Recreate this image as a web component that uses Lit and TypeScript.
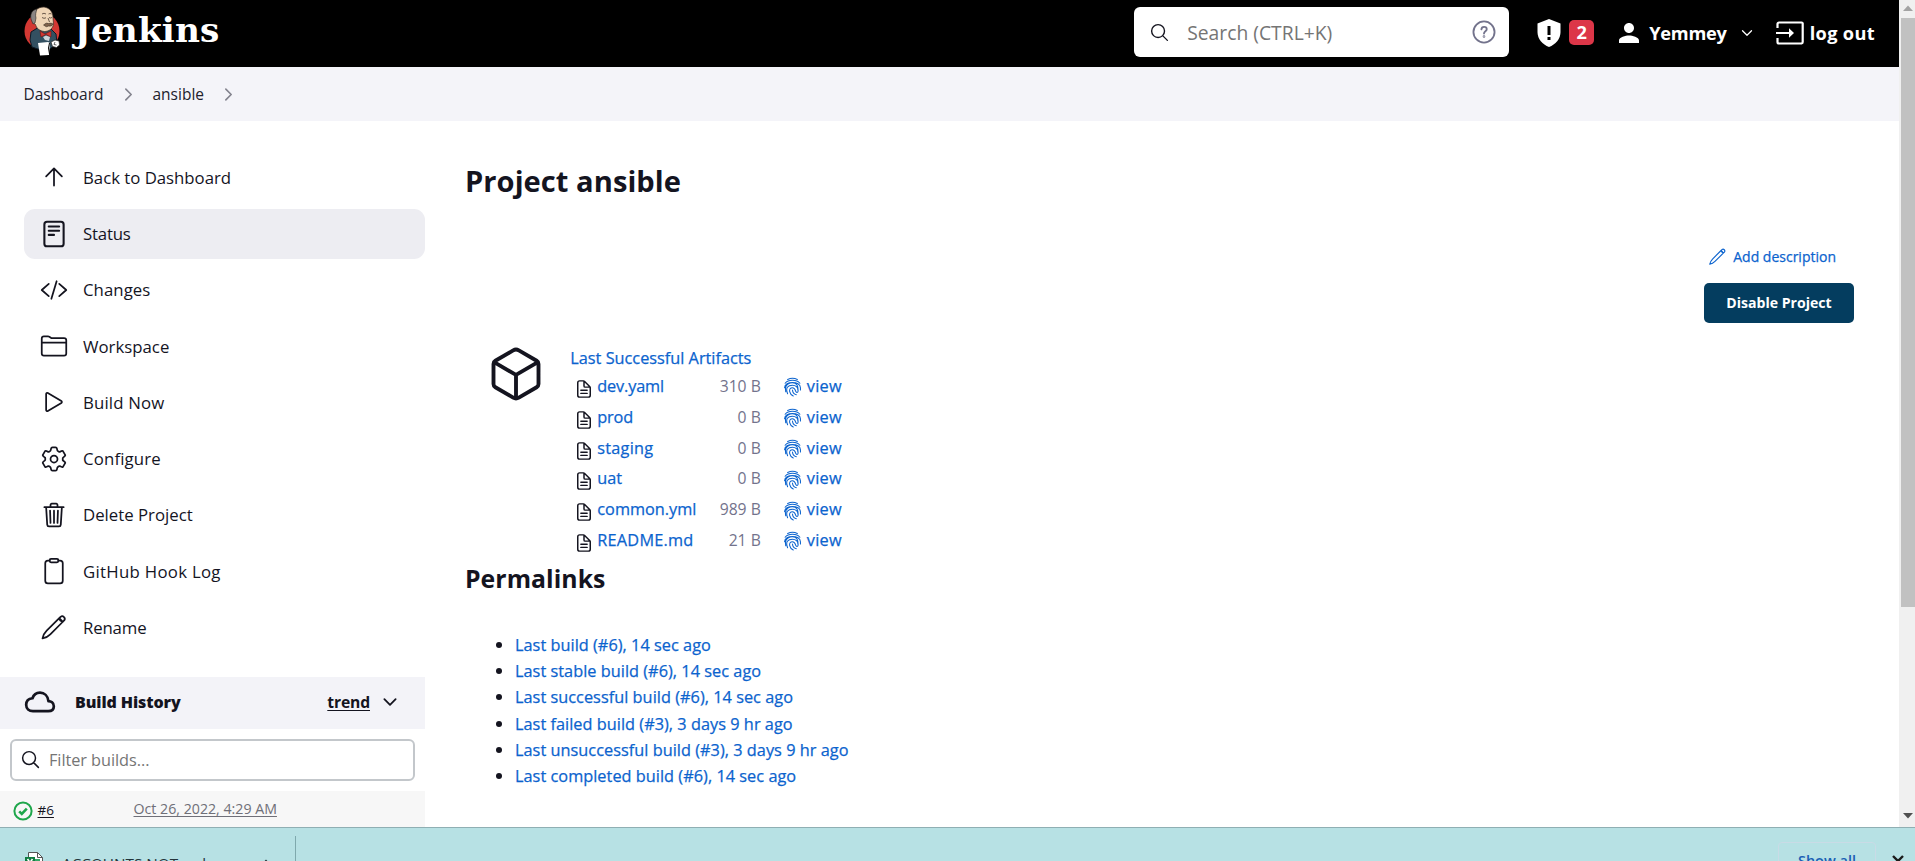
import { LitElement, html, svg, css, nothing, type TemplateResult } from "lit";
import { customElement, property } from "lit/decorators.js";
import { styleMap } from "lit/directives/style-map.js";

const ICONS: Record<string, TemplateResult> = {
  search: svg`<path d="M221.09 64a157.09 157.09 0 10157.09 157.09A157.1 157.1 0 00221.09 64zM338.29 338.29L448 448"/>`,
  up: svg`<path d="M112 244l144-144 144 144M256 120v292"/>`,
  status: svg`<rect x="80" y="32" width="352" height="448" rx="48"/><path d="M160 120h190M160 196h190M160 272h96"/>`,
  code: svg`<path d="M160 368L32 256l128-112M352 368l128-112-128-112M304 96l-96 320"/>`,
  folder: svg`<path d="M440 432H72a40 40 0 01-40-40V120a40 40 0 0140-40h75.89a40 40 0 0122.19 6.72l27.84 18.56a40 40 0 0022.19 6.72H440a40 40 0 0140 40v240a40 40 0 01-40 40zM32 192h448"/>`,
  play: svg`<path d="M112 111v290c0 17.44 17 28.52 31 20.16l247.9-148.37c12.12-7.25 12.12-26.33 0-33.58L143 90.84c-14-8.36-31 2.72-31 20.16z"/>`,
  gear: svg`<circle cx="256" cy="256" r="64"/><path d="M416.4 256a154 154 0 01-1.5 20.8c12 14 45.200 26 47.600 49.200l-42.800 74c-22 10-44 -6-58 -13.500a16 16 0 00-15.200 1.800A164 164 0 01325 400.800c-9 5-10 20-15.500 46 -2 14-12 23.200-26 23.200h-55c-14 0-24-9-26-23.200-5-26-6-41-15.500-46a155 155 0 01-21.500-12.600 16 16 0 00-15.100-1.700c-14 7.500-36 23.500-58 13.500l-42.800-74c2-22 26-32 40.700-43.700a16 16 0 006-14.100 145 145 0 010-24.900 16 16 0 00-6-13.900C75.500 217.700 51.500 208 49.500 186l42.800-74c22-10 44 6 58 13.500a16 16 0 0015.200-1.800A164 164 0 01187 111.200c9-5 10-20 15.500-46C204.500 51 214.500 42 228.500 42h55c14 0 24 9 26 23.200 5 26 6 41 15.500 46a155 155 0 0121.500 12.600 16 16 0 0015.100 1.700c14-7.500 36-23.500 58-13.500l42.800 74c-2 22-26 32-40.700 43.700a16 16 0 00-6 14.100z"/>`,
  trash: svg`<path d="M112 112l20 320c.95 18.49 14.4 32 32 32h184c17.67 0 30.87-13.51 32-32l20-320M80 112h352M192 112V72a23.93 23.93 0 0124-24h80a23.93 23.93 0 0124 24v40M256 176v224M184 176l8 224M328 176l-8 224"/>`,
  clipboard: svg`<path d="M336 64h32a48 48 0 0148 48v320a48 48 0 01-48 48H144a48 48 0 01-48-48V112a48 48 0 0148-48h32"/><rect x="176" y="32" width="160" height="64" rx="26"/>`,
  pencil: svg`<path d="M352 94L122 324C80 366 54 420 46 466c46-8 100-34 142-76l230-230M352 94l24-24a47 47 0 0166 66l-24 24zM352 94q10 56 66 66"/>`,
  cloud: svg`<path d="M400 240c-8.89-89.54-71-144-144-144-69 0-113.44 48.2-128 96-60 6-108 43.59-108 112 0 66 50 108 116 108h260c55 0 96-27.44 96-84 0-59.820-49-85.760-92-88z"/>`,
  cube: svg`<path d="M448 341.37V170.61A32 32 0 00432.11 143l-152-88.46a47.94 47.94 0 00-48.24 0L79.89 143A32 32 0 0064 170.61v170.76A32 32 0 0079.89 369l152 88.46a48 48 0 0048.24 0l152-88.46A32 32 0 00448 341.37zM69 154l187 110 187-110M256 464V264"/>`,
  file: svg`<path d="M416 221.25V416a48 48 0 01-48 48H144a48 48 0 01-48-48V96a48 48 0 0148-48h98.75a32 32 0 0122.62 9.37l141.26 141.26a32 32 0 019.37 22.62zM256 56v120a32 32 0 0032 32h120M176 288h160M176 368h160"/>`,
  finger: svg`<path d="M125 42C205 2 307 2 387 42M58 142C140 36 372 36 454 142M42 262C42 74 470 74 470 262v60M74 372C20 120 256 130 256 130c120 0 156 84 152 220-2 50-52 44-62 16-20-60-26-106-90-106-56 0-90 40-76 106 14 60 44 96 96 120M124 424C60 268 130 196 256 196c90 0 150 60 144 130M256 322c4 80 46 116 104 128"/>`,
  chevR: svg`<path d="M184 112l144 144-144 144"/>`,
  chevD: svg`<path d="M112 184l144 144 144-144"/>`,
  help: svg`<circle cx="256" cy="256" r="208"/><path d="M205 205c2-34 24-50 53-50 32 0 52 20 52 46 0 40-54 42-54 86"/><circle cx="256" cy="345" r="8"/>`,
};

interface Entry { label: string; spacing?: number }
interface Task extends Entry { icon: string; active?: boolean }
interface Artifact extends Entry { size: string }

const TASKS: Task[] = [
  { icon: "up", label: "Back to Dashboard", spacing: -0.02 },
  { icon: "status", label: "Status", spacing: -0.2, active: true },
  { icon: "code", label: "Changes", spacing: 0.05 },
  { icon: "folder", label: "Workspace" },
  { icon: "play", label: "Build Now", spacing: 0.16 },
  { icon: "gear", label: "Configure", spacing: 0.15 },
  { icon: "trash", label: "Delete Project" },
  { icon: "clipboard", label: "GitHub Hook Log", spacing: 0.29 },
  { icon: "pencil", label: "Rename", spacing: -0.15 },
];

const ARTIFACTS: Artifact[] = [
  { label: "dev.yaml", size: "310 B", spacing: -0.15 },
  { label: "prod", size: "0 B", spacing: -0.15 },
  { label: "staging", size: "0 B", spacing: 0.22 },
  { label: "uat", size: "0 B" },
  { label: "common.yml", size: "989 B" },
  { label: "README.md", size: "21 B", spacing: 0.22 },
];

const PERMALINKS = [
  "Last build (#6), 14 sec ago",
  "Last stable build (#6), 14 sec ago",
  "Last successful build (#6), 14 sec ago",
  "Last failed build (#3), 3 days 9 hr ago",
  "Last unsuccessful build (#3), 3 days 9 hr ago",
  "Last completed build (#6), 14 sec ago",
];

const tracking = (e: Entry) => styleMap({ letterSpacing: `${e.spacing ?? 0}px` });

@customElement("line-icon")
class LineIcon extends LitElement {
  @property() name = "";
  @property({ type: Number }) size = 28;
  @property({ type: Number }) weight = 32;
  static styles = css`
    :host { display: block; flex: none; }
    svg { display: block; overflow: visible; fill: none; stroke: currentColor; stroke-linecap: round; stroke-linejoin: round; }
  `;
  render() {
    return html`<svg width=${this.size} height=${this.size} viewBox="0 0 512 512" stroke-width=${this.weight}>${ICONS[this.name] ?? nothing}</svg>`;
  }
}

@customElement("page-header")
class PageHeader extends LitElement {
  static styles = css`
    :host { display: flex; height: 67px; background: #000; color: #fff; font-weight: 700; font-size: 18.2px; }
    .brand { display: flex; align-items: flex-start; padding: 6px 0 0 24px; gap: 14.500px; }
    .word { font: 700 34.3px/48px "DejaVu Serif", serif; letter-spacing: .15px; }
    .tools { display: flex; margin-left: auto; padding-right: 24px; }
    .search { display: flex; align-items: center; box-sizing: border-box; width: 375px; height: 50px; margin-top: 7px; padding: 0 12px 0 15px; border-radius: 6px; background: #fff; color: #14141f; }
    .search .hint { flex: 1; margin-left: 17px; font-weight: 400; font-size: 19.3px; color: #757575; }
    .search .help { color: #73738c; }
    .group { display: flex; align-items: center; height: 65px; }
    .shield { margin-left: 28px; }
    .badge { box-sizing: border-box; width: 25px; height: 25px; margin-left: 8px; border-radius: 5px; background: #dc3648; line-height: 25px; text-align: center; }
    .user { margin-left: 25px; }
    .user .name { margin-left: 10px; letter-spacing: -0.25px; }
    .user .arrow { margin-left: 12px; }
    .out { margin-left: 21px; }
    .out span { margin-left: 6px; letter-spacing: 0.35px; }
    svg { display: block; flex: none; }
  `;
  render() {
    return html`
      <div class="brand">
        <svg width="36" height="50" viewBox="0 0 36 50">
          <ellipse cx="18" cy="25" rx="17.500" ry="18" fill="#d33833"/>
          <path d="M7 26l8-5 11 1 6 6 1 9-7 6-9 1-9-3-2-7z" fill="#335061" stroke="#0d1a26" stroke-width="1"/>
          <path d="M8 12c0-7 6-11 12-11 6 1 9 5 9 11l.5 6c-.5 5-5 7.500-9 7.500-5-.5-8-3-9-7l-3-2z" fill="#f0d6b7" stroke="#3a2c24" stroke-width=".7"/>
          <path d="M13 3C8 4 6 8 7 13l2 5 2-1 1-5c-1-3 0-6 1-9z" fill="#8a8583" stroke="#2b2624" stroke-width=".6"/>
          <path d="M18 8q2-1.500 4 0M24.500 8q1.500-1 3 0M18 11.500q2 1.500 4 .3M25 11.500q1.500 1 3 0M24 12l1.500 4" fill="none" stroke="#4a3a30" stroke-width=".8"/>
          <path d="M19.500 19q3-3 5-1.500 3-1 4.500.5-1 3-4.500 2-2 2-5-1z" fill="#81634c" stroke="#2f261f" stroke-width=".5"/>
          <path d="M16 25l5 3 6-3v6l-5-2.500-5 2.500z" fill="#d33833" stroke="#6d1413" stroke-width=".6"/>
          <path d="M19 31l3-1.500 4 1.500-1 4-4-1z" fill="#cdd3d8"/>
          <path d="M27 36l4-2 4 1 .5 4-3 2.500-4-1z" fill="#fff" stroke="#222" stroke-width=".7"/>
          <path d="M31 36l-1 2.500 2.500.5" fill="none" stroke="#222" stroke-width=".7"/>
          <path d="M14 37l10-1 2 1-1 12-9 .5z" fill="#fff"/>
          <path d="M25.500 37l-1 5 1 6" fill="none" stroke="#000" stroke-width="1"/>
        </svg>
        <span class="word">Jenkins</span>
      </div>
      <div class="tools">
        <div class="search">
          <line-icon name="search" size="21" weight="34"></line-icon>
          <span class="hint">Search (CTRL+K)</span>
          <line-icon class="help" name="help" size="26" weight="36"></line-icon>
        </div>
        <div class="group shield">
          <svg width="24" height="28" viewBox="0 0 24 28"><path fill="#fff" d="M12 0l11.500 4.500v8.500c0 7-5 12.500-11.500 15C5.500 25.500.5 20 .5 13V4.500z"/><path fill="#000" d="M10.500 7h3v9h-3zM10.500 18h3v3h-3z"/></svg>
          <span class="badge">2</span>
        </div>
        <div class="group user">
          <svg width="20" height="20" viewBox="4 4 16 16" fill="#fff"><path d="M12 12c2.210 0 4-1.790 4-4s-1.790-4-4-4-4 1.790-4 4 1.790 4 4 4zm0 2c-2.670 0-8 1.340-8 4v2h16v-2c0-2.660-5.330-4-8-4z"/></svg>
          <span class="name">Yemmey</span>
          <line-icon class="arrow" name="chevD" size="16" weight="40"></line-icon>
        </div>
        <div class="group out">
          <svg width="28" height="24" viewBox="0 0 28 24" fill="none" stroke="#fff" stroke-width="2.200"><path d="M1.500 7V3a1.500 1.500 0 011.500-1.500h22.500A1.200 1.200 0 0126.700 3v18a1.500 1.500 0 01-1.200 1.500H3A1.500 1.500 0 011.500 21v-4M0 12h15"/><path d="M13 7.200l5 4.800-5 4.800z" fill="#fff" stroke="none"/></svg>
          <span>log out</span>
        </div>
      </div>`;
  }
}

@customElement("side-panel")
class SidePanel extends LitElement {
  static styles = css`
    :host { display: flex; flex-direction: column; width: 425px; flex: none; color: #14141f; }
    nav { display: flex; flex-direction: column; gap: 6.250px; padding: 31.400px 0 0 24px; }
    .task { display: flex; align-items: center; box-sizing: border-box; height: 50px; padding-left: 16px; gap: 15px; border-radius: 11px; font-size: 16.800px; }
    .active { background: #ededf2; }
    .history { display: flex; align-items: center; box-sizing: border-box; height: 52px; margin-top: 24.500px; padding: 0 25px 1px 25px; background: #f3f3f8; font-weight: 700; font-size: 16px; }
    .history b { margin-left: 20px; letter-spacing: -.1px; }
    .history u { margin-left: auto; margin-right: 10px; font-size: 15.700px; letter-spacing: -.15px; text-underline-offset: 2px; }
    .filter { display: flex; align-items: center; box-sizing: border-box; height: 43px; margin: 10px; padding: 0 9px; border: 2px solid #c3c7cb; border-radius: 6px; color: #14141f; }
    .filter line-icon { margin-left: -1px; }
    .filter span { margin-left: 8px; margin-top: 1px; font-size: 16.300px; color: #757575; letter-spacing: -.05px; }
    .build { display: flex; align-items: center; height: 36px; padding-left: 13px; background: #f7f7f7; font-size: 14.200px; text-underline-offset: 2px; }
    .build svg { margin-top: 3px; }
    .build u { margin-top: -1px; }
    .build .num { width: 96px; margin-left: 4.500px; }
    .build .num u { font-size: 13.500px; }
    .build .date { color: #6f6f78; }
  `;
  render() {
    return html`
      <nav>
        ${TASKS.map((t) => html`<div class="task ${t.active ? "active" : ""}">
          <line-icon name=${t.icon} size="28" weight=${t.icon === "status" ? 38 : 32}></line-icon>
          <span style=${tracking(t)}>${t.label}</span>
        </div>`)}
      </nav>
      <div class="history">
        <line-icon name="cloud" size="30" weight="46"></line-icon>
        <b>Build History</b><u>trend</u>
        <line-icon name="chevD" size="20" weight="46"></line-icon>
      </div>
      <div class="filter"><line-icon name="search" size="21" weight="36"></line-icon><span>Filter builds...</span></div>
      <div class="build">
        <svg width="20" height="20" viewBox="0 0 20 20" fill="none" stroke="#1ea64b"><circle cx="10" cy="10" r="8.600" stroke-width="2"/><path d="M6.200 10.300l2.600 2.600 5-5.200" stroke-width="2.600"/></svg>
        <span class="num"><u>#6</u></span><u class="date">Oct 26, 2022, 4:29 AM</u>
      </div>`;
  }
}

@customElement("project-view")
class ProjectView extends LitElement {
  static styles = css`
    :host { display: flex; flex-direction: column; flex: 1; padding: 40px 45px 0 40px; color: #14141f; font-size: 16.300px; }
    h1 { margin: 0; font-size: 29.100px; line-height: 40px; letter-spacing: .05px; }
    a, .add { color: #0b63ce; font-weight: 500; -webkit-text-stroke: .25px currentColor; }
    .actions { display: flex; flex-direction: column; align-items: flex-end; margin-top: 45px; }
    .add { display: flex; align-items: center; height: 20px; gap: 6px; padding-right: 18px; font-size: 14px; }
    .disable { box-sizing: border-box; width: 150px; height: 40px; margin-top: 17px; border-radius: 5px; background: #043d5f; color: #fff; font-weight: 700; font-size: 14.100px; line-height: 40.500px; text-align: center; }
    .artifacts { display: flex; margin-top: 21.500px; padding-left: 21px; }
    .artifacts .cube { margin-top: -.5px; }
    .list { margin-left: 24.300px; }
    .title { display: block; line-height: 26.200px; }
    .row { display: grid; grid-template-columns: 20.500px 110px 53.500px 24px 22px auto; height: 30.800px; align-items: center; padding-left: 6.500px; }
    .row line-icon { color: #14141f; }
    .row .file { margin-left: -3px; margin-top: 6px; }
    .size { color: #73738c; font-size: 15.700px; text-align: right; }
    .row .print { grid-column: 5; color: #0b63ce; margin-left: -1.500px; margin-top: 3.500px; }
    .view { letter-spacing: .24px; }
    h2 { margin: 5px 0 0; font-size: 24.800px; line-height: 36px; letter-spacing: .05px; }
    ul { margin: 35px 0 0; padding: 0; list-style: none; }
    li { display: flex; align-items: center; gap: 13px; height: 26.300px; padding-left: 31px; letter-spacing: .03px; }
    li::before { content: ""; width: 6px; height: 6px; border-radius: 50%; background: #14141f; }
  `;
  render() {
    return html`
      <h1>Project ansible</h1>
      <div class="actions">
        <div class="add"><line-icon name="pencil" size="19" weight="30"></line-icon>Add description</div>
        <div class="disable">Disable Project</div>
      </div>
      <div class="artifacts">
        <line-icon class="cube" name="cube" size="60" weight="33"></line-icon>
        <div class="list">
          <a class="title">Last Successful Artifacts</a>
          ${ARTIFACTS.map((f) => html`<div class="row">
            <line-icon class="file" name="file" size="20" weight="38"></line-icon>
            <a style=${tracking(f)}>${f.label}</a>
            <span class="size">${f.size}</span>
            <line-icon class="print" name="finger" size="19" weight="28"></line-icon>
            <a class="view">view</a>
          </div>`)}
        </div>
      </div>
      <h2>Permalinks</h2>
      <ul>${PERMALINKS.map((p) => html`<li><a>${p}</a></li>`)}</ul>`;
  }
}

@customElement("download-bar")
class DownloadBar extends LitElement {
  static styles = css`
    :host { display: flex; height: 34px; box-sizing: border-box; overflow: hidden; border-top: 1px solid #8fafb3; background: #b7e1e4; color: #23343a; font-size: 15.300px; }
    .item { display: flex; box-sizing: border-box; width: 296px; height: 40px; margin-top: 8px; padding: 16px 24px 0 25px; border-right: 1px solid #7fa9ad; }
    .item span { margin-left: 19px; line-height: 22px; margin-top: 0; white-space: nowrap; }
    .item .tip { margin: 7px 0 0 auto; }
    .all { box-sizing: border-box; width: 98px; height: 36px; margin: 14px 16px 0 auto; border: 1px solid #c9dbe6; border-radius: 4px; color: #1a5fb4; font-weight: 600; font-size: 14.500px; line-height: 36px; text-align: center; }
    .close { margin: 26px 11px 0 0; }
    svg { flex: none; }
  `;
  render() {
    return html`
      <div class="item">
        <svg width="18" height="24" viewBox="0 0 18 24"><path d="M3.500.5h9l5 5V24h-14z" fill="#fff" stroke="#555"/><path d="M12.500.5v5h5" fill="none" stroke="#555"/><path d="M10 7h5v3h-5z" fill="#33a867"/><path d="M0 5h10v11H0z" fill="#107c41"/><path d="M2.500 7l5 7m0-7l-5 7" stroke="#fff" stroke-width="1.600"/></svg>
        <span>ACCOUNTS NOT....xlsx</span>
        <svg class="tip" width="10" height="7" viewBox="0 0 10 7" fill="none" stroke="#23343a" stroke-width="2"><path d="M1 6l4-4 4 4"/></svg>
      </div>
      <div class="all">Show all</div>
      <svg class="close" width="12" height="14" viewBox="0 0 12 14" stroke="#1b1b1b" stroke-width="2.400"><path d="M1 2l10 10M11 2L1 12"/></svg>`;
  }
}

@customElement("app-root")
class AppRoot extends LitElement {
  static styles = css`
    :host { display: flex; flex-direction: column; height: 861px; overflow: hidden; background: #fff; font-family: "Open Sans", "Noto Sans", sans-serif; }
    .window { display: flex; height: 827px; overflow: hidden; }
    .page { display: flex; flex-direction: column; width: 1899px; }
    .crumbs { display: flex; align-items: center; box-sizing: border-box; height: 54px; padding: 0 0 1px 23.500px; background: #f4f4f9; color: #22222c; font-size: 15.500px; }
    .crumbs line-icon { color: #83838e; margin: 2px 15px 0 15px; }
    .body { display: flex; flex: 1; min-height: 0; }
    .track { display: flex; flex-direction: column; box-sizing: border-box; width: 16px; padding: 5px 0 8px 2px; background: #f0f0f0; align-items: center; }
    .thumb { width: 14px; height: 589px; margin: 7px 0 auto; background: #c1c1c1; }
    svg { display: block; }
  `;
  render() {
    return html`
      <div class="window">
        <div class="page">
          <page-header></page-header>
          <div class="crumbs">
            <span>Dashboard</span><line-icon name="chevR" size="19" weight="44"></line-icon>
            <span>ansible</span><line-icon name="chevR" size="19" weight="44"></line-icon>
          </div>
          <div class="body"><side-panel></side-panel><project-view></project-view></div>
        </div>
        <div class="track">
          <svg width="10" height="6" viewBox="0 0 10 6"><path d="M0 6l5-5.500 5 5.500z" fill="#a3a3a3"/></svg>
          <div class="thumb"></div>
          <svg width="10" height="6" viewBox="0 0 10 6"><path d="M0 0h10l-5 5.500z" fill="#505050"/></svg>
        </div>
      </div>
      <download-bar></download-bar>`;
  }
}
